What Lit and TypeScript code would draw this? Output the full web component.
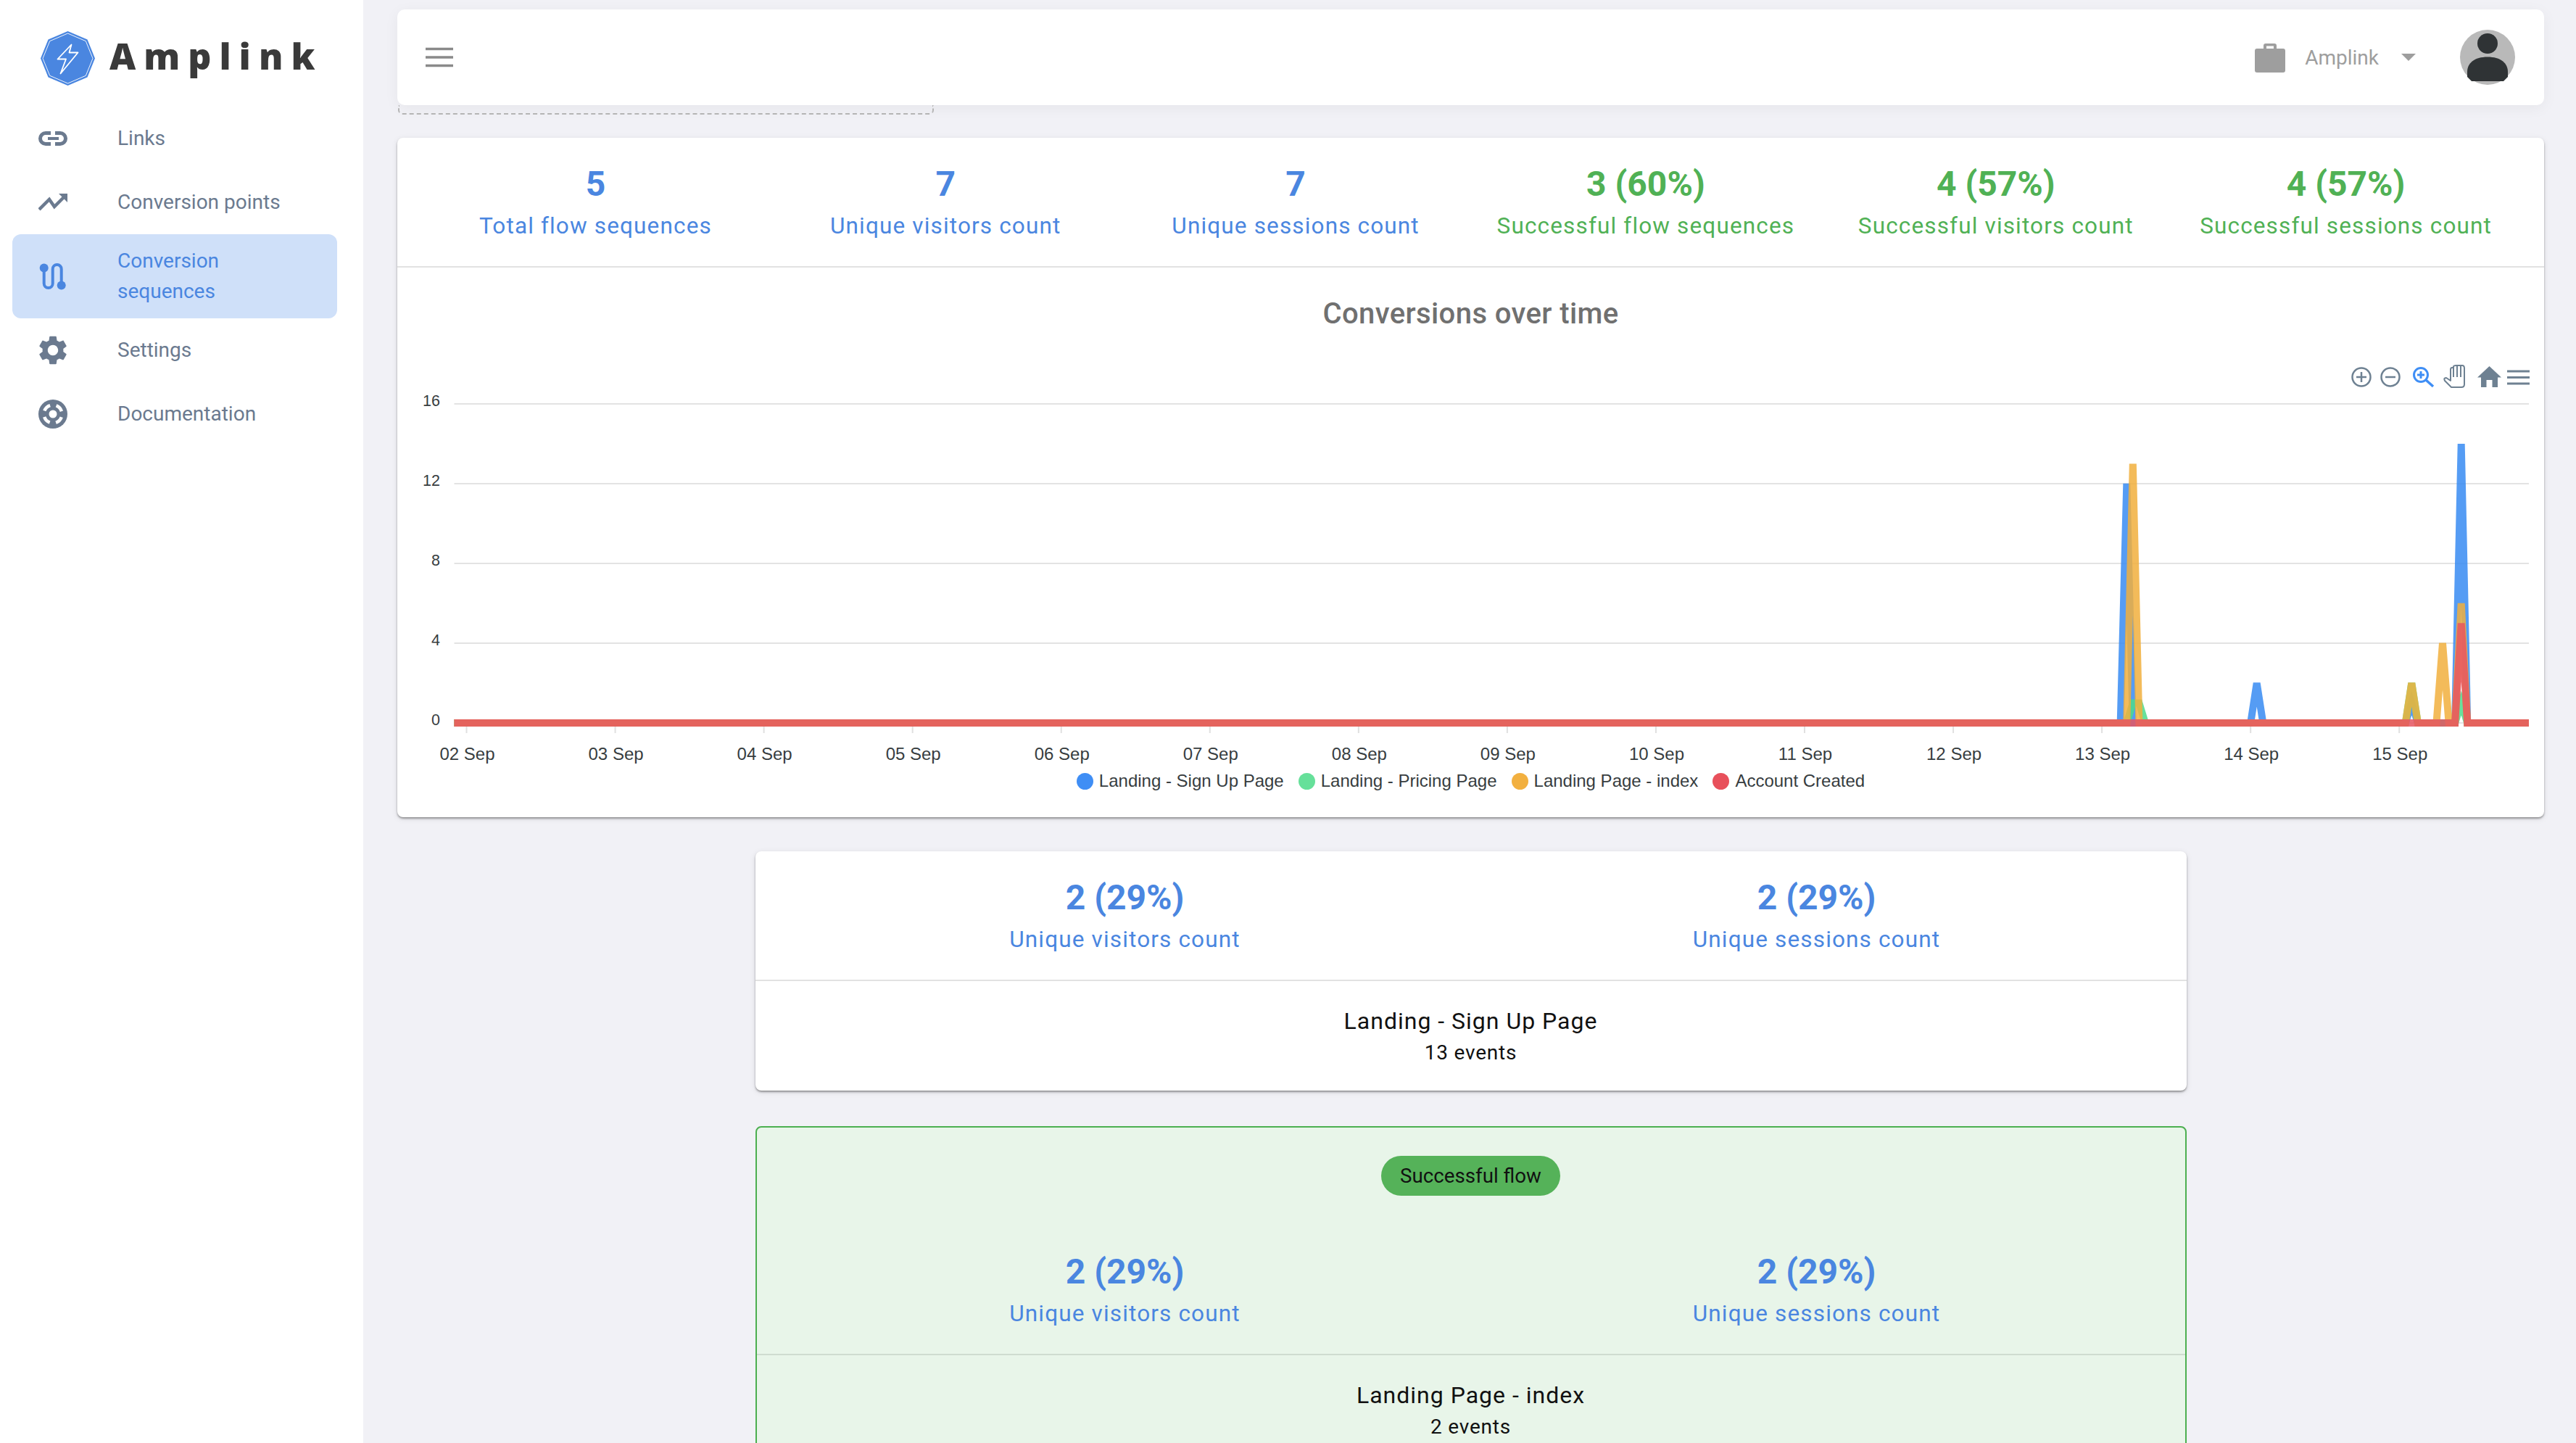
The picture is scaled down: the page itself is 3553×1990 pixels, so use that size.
import { LitElement, html, svg, css } from 'lit';
import { customElement } from 'lit/decorators.js';

const Y0 = 539;
const UNIT = 27.5;
const X0 = 95.5;
const HOUR = 8.544;
const W = 2961;
const H = 602;

type Pts = [number, number][];

// hours since 02 Sep 00:00 -> value, zero everywhere else
const BLUE: Pts = [[268, 12], [289, 2], [314, 1], [322, 14]];
const GREEN: Pts = [[269, 1], [270, 1], [314, 2], [322, 1]];
const ORANGE: Pts = [[269, 13], [314, 2], [319, 4], [322, 6]];
const RED: Pts = [[322, 5]];

const DAYS = ['02', '03', '04', '05', '06', '07', '08', '09', '10', '11', '12', '13', '14', '15'];

function linePath(spikes: Pts): string {
  const map = new Map(spikes);
  let d = '';
  for (let h = -2; h <= 333; h++) {
    const v = map.get(h) ?? 0;
    const x = Math.min(X0 + h * HOUR, 2940);
    const y = Y0 - v * UNIT;
    d += `${h === -2 ? 'M' : 'L'}${x.toFixed(1)} ${y}`;
  }
  return d;
}

@customElement('app-root')
export class AppRoot extends LitElement {
  static styles = css`
    :host {
      display: flex;
      height: 100vh;
      overflow: hidden;
      background: #f1f1f6;
      font-family: Roboto, 'Liberation Sans', sans-serif;
    }

    .sidebar {
      width: 501px;
      flex: none;
      background: #fff;
      box-sizing: border-box;
      padding: 43px 36px 0 17px;
    }

    .logo {
      display: flex;
      align-items: center;
      gap: 20px;
      padding-left: 39px;
      height: 75px;
      margin-bottom: 29px;
    }

    .logo svg {
      width: 75px;
      height: 75px;
    }

    .logo span {
      font-family: 'Open Sans', sans-serif;
      font-weight: 800;
      font-size: 50px;
      letter-spacing: 11px;
      color: #3a3a3a;
      padding-bottom: 8px;
    }

    .nav {
      display: flex;
      flex-direction: column;
    }

    .nav-item {
      display: flex;
      align-items: center;
      min-height: 88px;
      padding-left: 36px;
      border-radius: 12px;
      color: #6b7a8f;
      font-size: 28px;
      line-height: 42px;
    }

    .nav-item.active {
      background: #cfe0f9;
      color: #4a86e0;
      min-height: 116px;
    }

    .nav-item svg {
      width: 40px;
      height: 40px;
      flex: none;
      margin-right: 69px;
    }

    .nav-item .label {
      width: 200px;
    }

    .nav-item:not(.active) .label {
      width: auto;
      white-space: nowrap;
    }

    .main {
      flex: 1;
      min-width: 0;
      box-sizing: border-box;
      padding: 13px 44px 0 47px;
    }

    .topbar {
      position: relative;
      height: 132px;
      background: #fff;
      border-radius: 10px;
      box-shadow: 0 4px 20px rgba(0, 0, 0, 0.05);
      display: flex;
      align-items: center;
      padding: 0 40px 0 38px;
      margin-bottom: 45px;
    }

    .topbar::after {
      content: '';
      position: absolute;
      left: 1px;
      top: 132px;
      width: 739px;
      height: 13px;
      box-sizing: border-box;
      border: 2px dashed #b5b5b5;
      border-top: 0;
      border-radius: 0 0 6px 6px;
    }

    .burger {
      width: 40px;
      height: 40px;
    }

    .spacer {
      flex: 1;
    }

    .org {
      display: flex;
      align-items: center;
      color: #9e9e9e;
      font-size: 28px;
    }

    .org svg.case {
      width: 42px;
      height: 42px;
      margin-right: 27px;
    }

    .org .caret {
      width: 0;
      height: 0;
      margin: 0 61px 0 31px;
      border-left: 10px solid transparent;
      border-right: 10px solid transparent;
      border-top: 10px solid #9e9e9e;
    }

    .avatar {
      width: 76px;
      height: 76px;
    }

    .card {
      background: #fff;
      border-radius: 8px;
      box-shadow: 0 2px 3px -1px rgba(0, 0, 0, 0.3), 0 2px 3px rgba(0, 0, 0, 0.2), 0 2px 8px rgba(0, 0, 0, 0.1);
    }

    .stats {
      display: grid;
      grid-template-columns: repeat(6, 1fr);
      box-sizing: border-box;
      padding: 0 32px;
      height: 179px;
      border-bottom: 2px solid #e2e2e2;
    }

    .pair {
      grid-template-columns: 1fr 1fr;
      padding: 0 33px;
    }

    .stat {
      text-align: center;
      padding-top: 33px;
    }

    .stat .num {
      font-size: 48px;
      line-height: 62px;
      font-weight: 700;
    }

    .stat .lbl {
      font-size: 31.5px;
      line-height: 46px;
      letter-spacing: 1.15px;
      margin-top: 4px;
    }

    .blue {
      color: #4a86e0;
    }

    .green {
      color: #50b155;
    }

    .chart-title {
      text-align: center;
      font-size: 40px;
      font-weight: 500;
      line-height: 50px;
      color: #707070;
      padding-top: 39px;
      letter-spacing: 0.4px;
    }

    .plot {
      height: 602px;
    }

    .plot svg {
      display: block;
      width: 100%;
      height: 100%;
    }

    .plot text {
      font-family: 'Liberation Sans', sans-serif;
      font-size: 24px;
      fill: #373d3f;
    }

    .plot text.y-label {
      font-size: 21.5px;
    }

    .legend {
      display: flex;
      justify-content: center;
      gap: 20px;
      font-family: 'Liberation Sans', sans-serif;
      font-size: 24px;
      line-height: 34px;
      color: #373d3f;
      padding-bottom: 33px;
    }

    .legend div {
      display: flex;
      align-items: center;
      gap: 8px;
    }

    .legend i {
      width: 23px;
      height: 23px;
      border-radius: 50%;
    }

    .column {
      width: 1974px;
      margin: 47px auto 0;
    }

    .column + .column {
      margin-top: 49px;
    }

    .step-name {
      text-align: center;
      color: #111;
      padding: 36px 0 27px;
    }

    .step-name .name {
      font-size: 32px;
      line-height: 38px;
      letter-spacing: 1px;
    }

    .step-name .count {
      font-size: 28px;
      line-height: 50px;
      letter-spacing: 0.8px;
    }

    .success {
      background: #e8f5e9;
      border: 2px solid #4caf50;
      box-shadow: none;
      box-sizing: border-box;
    }

    .success .pair {
      border-bottom-color: #cfdcd0;
      padding: 0 31px;
    }

    .badge-row {
      display: flex;
      justify-content: center;
      padding-top: 39px;
      margin-bottom: 41px;
    }

    .badge {
      height: 55px;
      line-height: 55px;
      padding: 0 26px;
      border-radius: 28px;
      background: #55b259;
      font-size: 27.7px;
      color: #111;
    }
  `;

  private _icons: Record<string, unknown> = {
    link: svg`<g fill="none" stroke="#6b7a8f"><path stroke-width="5" d="M17 12.5H10a7.500 7.500 0 0 0 0 15H17M23 12.5H30a7.500 7.500 0 0 1 0 15H23"/><path stroke-width="4" d="M13 20H28"/></g>`,
    trend: svg`<path fill="none" stroke="#6b7a8f" stroke-width="4.500" d="M1 30L15 16L22 26L37 11"/><path fill="#6b7a8f" d="M28 8H40V20z"/>`,
    flow: svg`<circle cx="7.700" cy="8.500" r="6" fill="#4a86e0"/><circle cx="31.700" cy="32.500" r="6" fill="#4a86e0"/><path fill="none" stroke="#4a86e0" stroke-width="4" d="M7.700 8.500V30a6 6 0 0 0 12 0V10a6 6 0 0 1 12 0V32.500"/>`,
    gear: svg`<path transform="translate(-4 -4) scale(2)" fill="#6b7a8f" d="M19.140 12.940c.04-.3.060-.61.060-.94 0-.32-.02-.64-.07-.94l2.030-1.580c.18-.14.230-.41.120-.61l-1.920-3.320c-.12-.22-.37-.29-.59-.22l-2.390.960c-.5-.38-1.030-.7-1.620-.94l-.36-2.540c-.04-.24-.24-.41-.48-.41h-3.840c-.24 0-.43.170-.47.410l-.36 2.540c-.59.240-1.130.570-1.620.940l-2.390-.96c-.22-.08-.47 0-.59.220L2.740 8.870c-.12.210-.08.470.120.610l2.030 1.580c-.05.3-.09.630-.09.940s.02.640.07.940l-2.030 1.580c-.18.140-.23.410-.12.610l1.920 3.320c.12.220.37.290.59.220l2.390-.96c.5.380 1.030.7 1.620.94l.36 2.540c.05.240.24.410.48.410h3.840c.24 0 .44-.17.47-.41l.36-2.540c.59-.24 1.130-.56 1.620-.94l2.390.96c.22.080.47 0 .59-.22l1.920-3.320c.12-.22.070-.47-.12-.61l-2.010-1.580zM12 15.600c-1.980 0-3.600-1.620-3.600-3.600s1.620-3.600 3.600-3.600 3.600 1.620 3.600 3.600-1.620 3.600-3.600 3.600z"/>`,
    help: svg`<circle cx="20" cy="20" r="20" fill="#6b7a8f"/><circle cx="20" cy="20" r="5.500" fill="#fff"/><circle cx="20" cy="20" r="12.500" fill="none" stroke="#fff" stroke-width="4.500" stroke-dasharray="11 8.630" stroke-dashoffset="-4.300"/>`,
  };

  private _nav(icon: string, label: string, active = false) {
    return html`
      <div class="nav-item ${active ? 'active' : ''}">
        <svg viewBox="0 0 40 40">${this._icons[icon]}</svg>
        <span class="label">${label}</span>
      </div>
    `;
  }

  private _stat(num: string, label: string, color: string) {
    return html`
      <div class="stat ${color}">
        <div class="num">${num}</div>
        <div class="lbl">${label}</div>
      </div>
    `;
  }

  private _toolbar() {
    // apexcharts style toolbar, y centre at 62 in the plot
    const c = '#6e8192';
    return svg`
      <g fill="none" stroke=${c} stroke-width="2.500">
        <circle cx="2709" cy="62" r="12.500"/>
        <path d="M2702 62h14M2709 55v14"/>
        <circle cx="2749" cy="62" r="12.500"/>
        <path d="M2742 62h14"/>
      </g>
      <g fill="none" stroke="#3f8ef5" stroke-width="3">
        <circle cx="2791" cy="59" r="9.500"/>
        <path d="M2786 59h10M2791 54v10"/>
        <path stroke-width="3.500" d="M2798 66L2808 75"/>
      </g>
      <g fill="#fff" stroke=${c} stroke-width="2" stroke-linejoin="round">
        <path d="M2833 76L2824 67Q2822 63 2826 63L2832 67V52Q2832 49 2834 49H2836V47.500Q2836 46 2840 46H2848Q2851 46 2851 50V72Q2851 76 2847 76z"/>
        <path d="M2836 49V62M2841 46V62M2846 46V62"/>
      </g>
      <path fill=${c} d="M2885.500 47L2902 62.500h-5V76h-7.500V66h-8v10H2874V62.500h-5z"/>
      <path stroke=${c} stroke-width="3.200" d="M2910 54h31M2910 62.500h31M2910 71h31"/>
    `;
  }

  private _chart() {
    const grid = [16, 12, 8, 4, 0];
    return html`
      <div class="plot">
        <svg viewBox="0 0 ${W} ${H}">
          ${grid.map(
            (v) => svg`
              <line x1="78.500" x2="2940" y1=${Y0 - v * UNIT} y2=${Y0 - v * UNIT} stroke="#e3e3e3" stroke-width="2"/>
              <text class="y-label" x="59" y=${Y0 - v * UNIT + 3} text-anchor="end">${v}</text>
            `,
          )}
          ${DAYS.map((d, i) => {
            const x = X0 + i * 24 * HOUR;
            return svg`
              <line x1=${x} x2=${x} y1="544" y2="553" stroke="#e0e0e0" stroke-width="2"/>
              <text x=${x + 1} y="590" text-anchor="middle">${d} Sep</text>
            `;
          })}
          <g fill="none" stroke-width="10" stroke-opacity="0.85">
            <path d=${linePath(BLUE)} stroke="#378bf2"/>
            <path d=${linePath(GREEN)} stroke="#4edb8b"/>
            <path d=${linePath(ORANGE)} stroke="#f1af3d"/>
            <path d=${linePath(RED)} stroke="#e65560"/>
          </g>
          ${this._toolbar()}
        </svg>
      </div>
    `;
  }

  private _step(label: string, count: string) {
    return html`
      <div class="step-name">
        <div class="name">${label}</div>
        <div class="count">${count}</div>
      </div>
    `;
  }

  render() {
    return html`
      <aside class="sidebar">
        <div class="logo">
          <svg viewBox="0 0 75 75">
            <path fill="#4a86e0" d="M37.500 0L64.500 11.500 75 37.500 64.500 63.500 37.500 75 10.500 63.500 0 37.500 10.500 11.500z"/>
            <path fill="none" stroke="#fff" stroke-width="1" stroke-opacity="0.9" d="M37.500 3L62.300 13.700 72 37.500 62.300 61.300 37.500 72 12.700 61.300 3 37.500 12.700 13.700z"/>
            <path fill="none" stroke="#fff" stroke-width="1.800" stroke-linejoin="round" d="M42.500 18.500L23.500 38.500H35L27.500 58.500L51.500 29.500H39.500z"/>
          </svg>
          <span>Amplink</span>
        </div>
        <nav class="nav">
          ${this._nav('link', 'Links')}
          ${this._nav('trend', 'Conversion points')}
          ${this._nav('flow', 'Conversion sequences', true)}
          ${this._nav('gear', 'Settings')}
          ${this._nav('help', 'Documentation')}
        </nav>
      </aside>
      <main class="main">
        <header class="topbar">
          <svg class="burger" viewBox="0 0 40 40"><path stroke="#8a8a8a" stroke-width="3.500" d="M1 8.500h38M1 20h38M1 31.500h38"/></svg>
          <div class="spacer"></div>
          <div class="org">
            <svg class="case" viewBox="0 0 42 42"><path fill="#9e9e9e" d="M15 2h12a3 3 0 0 1 3 3v4h9a3 3 0 0 1 3 3v27a3 3 0 0 1-3 3H3a3 3 0 0 1-3-3V12a3 3 0 0 1 3-3h9V5a3 3 0 0 1 3-3zm1 3.500V9h10V5.500z"/></svg>
            <span>Amplink</span>
            <span class="caret"></span>
          </div>
          <svg class="avatar" viewBox="0 0 76 76">
            <circle cx="38" cy="38" r="38" fill="#b9b9b9"/>
            <circle cx="38" cy="19" r="14" fill="#2f3335"/>
            <path fill="#2f3335" d="M10 65V58c0-12 10-20.500 28-20.500S66 46 66 58v7l-6 6H16z"/>
          </svg>
        </header>

        <section class="card">
          <div class="stats">
            ${this._stat('5', 'Total flow sequences', 'blue')}
            ${this._stat('7', 'Unique visitors count', 'blue')}
            ${this._stat('7', 'Unique sessions count', 'blue')}
            ${this._stat('3 (60%)', 'Successful flow sequences', 'green')}
            ${this._stat('4 (57%)', 'Successful visitors count', 'green')}
            ${this._stat('4 (57%)', 'Successful sessions count', 'green')}
          </div>
          <div class="chart-title">Conversions over time</div>
          ${this._chart()}
          <div class="legend">
            <div><i style="background:#3f8ef5"></i>Landing - Sign Up Page</div>
            <div><i style="background:#66e09a"></i>Landing - Pricing Page</div>
            <div><i style="background:#f2b040"></i>Landing Page - index</div>
            <div><i style="background:#e8505b"></i>Account Created</div>
          </div>
        </section>

        <section class="card column">
          <div class="stats pair">
            ${this._stat('2 (29%)', 'Unique visitors count', 'blue')}
            ${this._stat('2 (29%)', 'Unique sessions count', 'blue')}
          </div>
          ${this._step('Landing - Sign Up Page', '13 events')}
        </section>

        <section class="card column success">
          <div class="badge-row"><span class="badge">Successful flow</span></div>
          <div class="stats pair">
            ${this._stat('2 (29%)', 'Unique visitors count', 'blue')}
            ${this._stat('2 (29%)', 'Unique sessions count', 'blue')}
          </div>
          ${this._step('Landing Page - index', '2 events')}
        </section>
      </main>
    `;
  }
}
